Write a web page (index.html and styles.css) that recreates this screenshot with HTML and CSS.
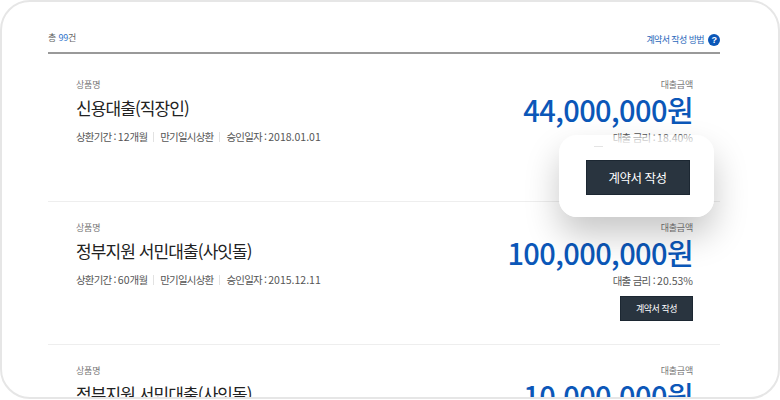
FILE: index.html
```html
<!DOCTYPE html>
<html lang="ko">

<head>
    <title>계약서 작성</title>
    <link rel="stylesheet" href="styles.css">
</head>

<body>
    <div class="frame">
        <div class="head">
            <div class="total">총 <b>99</b>건</div>
            <div class="guide">
                계약서 작성 방법
                <svg class="help" width="12" height="12" viewBox="0 0 12 12">
                    <circle cx="6" cy="6" r="6" fill="#0b57b8"></circle>
                    <text x="6" y="9.2" text-anchor="middle" font-size="9" font-weight="700" fill="#fff" font-family="Liberation Sans">?</text>
                </svg>
            </div>
        </div>

        <div class="row">
            <div class="info">
                <div class="label">상품명</div>
                <div class="name">신용대출(직장인)</div>
                <div class="meta">
                    <span>상환기간 : <i>12</i>개월</span>
                    <span>만기일시상환</span>
                    <span>승인일자 : <i>2018.01.01</i></span>
                </div>
            </div>
            <div class="loan">
                <div class="label">대출금액</div>
                <div class="amount">44,000,000원</div>
                <div class="rate">대출 금리 : <i>18.40%</i></div>
            </div>
        </div>

        <div class="row">
            <div class="info">
                <div class="label">상품명</div>
                <div class="name">정부지원 서민대출(사잇돌)</div>
                <div class="meta">
                    <span>상환기간 : <i>60</i>개월</span>
                    <span>만기일시상환</span>
                    <span>승인일자 : <i>2015.12.11</i></span>
                </div>
            </div>
            <div class="loan">
                <div class="label">대출금액</div>
                <div class="amount">100,000,000원</div>
                <div class="rate">대출 금리 : <i>20.53%</i></div>
                <button class="btn">계약서 작성</button>
            </div>
        </div>

        <div class="row">
            <div class="info">
                <div class="label">상품명</div>
                <div class="name">정부지원 서민대출(사잇돌)</div>
            </div>
            <div class="loan">
                <div class="label">대출금액</div>
                <div class="amount">10,000,000원</div>
            </div>
        </div>

        <div class="popup">
            <button class="btn-big">계약서 작성</button>
        </div>
    </div>
</body>

</html>
```

FILE: styles.css
```css
html,
body {
    margin: 0;
    height: 400px;
    overflow: hidden;
    background: #ffffff;
}

body {
    font-family: "Noto Sans CJK KR", "Noto Sans", sans-serif;
    color: #333333;
}

i {
    font-style: normal;
    letter-spacing: 0;
}

.frame {
    position: relative;
    box-sizing: border-box;
    width: 780px;
    height: 399px;
    padding: 0 58px 0 46px;
    border: 2px solid #e6e6e6;
    border-radius: 30px;
    overflow: hidden;
}

.head {
    display: flex;
    justify-content: space-between;
    align-items: flex-end;
    height: 44px;
    padding-bottom: 6px;
    border-bottom: 2px solid #999999;
}

.total {
    font-size: 9px;
    line-height: 12px;
    margin-bottom: 2px;
    letter-spacing: -0.2px;
    color: #666666;
}

.total b {
    font-weight: 400;
    color: #2f74cc;
}

.guide {
    display: flex;
    align-items: center;
    gap: 4px;
    font-size: 9px;
    line-height: 12px;
    letter-spacing: -0.6px;
    color: #2a68bb;
}

.row {
    display: flex;
    justify-content: space-between;
    height: 143px;
    padding: 20px 27px 0 28px;
    box-sizing: border-box;
    border-bottom: 1px solid #eeeeee;
}

.row:nth-child(2) {
    height: 148px;
    padding-top: 25px;
}

.label {
    font-size: 9px;
    line-height: 12px;
    letter-spacing: -0.2px;
    color: #777777;
}

.name {
    margin-top: 5px;
    font-size: 17px;
    line-height: 24px;
    letter-spacing: -0.9px;
    color: #222222;
}

.meta {
    display: flex;
    margin-top: 10px;
    font-size: 10.5px;
    line-height: 14px;
    letter-spacing: -0.8px;
    color: #555555;
}

.meta span + span {
    margin-left: 6px;
    padding-left: 7px;
    background: linear-gradient(#e2e2e2, #e2e2e2) left center / 1px 10px no-repeat;
}

.loan {
    display: flex;
    flex-direction: column;
    align-items: flex-end;
}

.amount {
    font-size: 29px;
    line-height: 36px;
    font-weight: 500;
    letter-spacing: -0.6px;
    color: #0b57b8;
}

.rate {
    margin-top: 3px;
    font-size: 10.5px;
    line-height: 15px;
    letter-spacing: -0.75px;
    color: #555555;
}

.btn {
    width: 73px;
    height: 25px;
    margin-top: 8px;
    padding: 0;
    border: 1px solid #1c2732;
    background: #29343f;
    color: #ffffff;
    font-family: inherit;
    font-size: 9px;
    letter-spacing: -0.5px;
}

.popup {
    position: absolute;
    left: 557px;
    top: 133px;
    display: flex;
    justify-content: center;
    align-items: center;
    width: 155px;
    height: 82px;
    border-radius: 18px;
    background: linear-gradient(rgba(255, 255, 255, 0.4), #ffffff 11px);
    box-shadow: 0 18px 34px rgba(0, 0, 0, 0.22);
}

.popup::before {
    content: "";
    position: absolute;
    left: 35px;
    top: 11px;
    width: 9px;
    height: 1px;
    background: #e4e4e4;
}

.btn-big {
    width: 104px;
    height: 35px;
    margin-top: 2px;
    margin-left: 2px;
    padding: 0;
    border: 1px solid #1c2732;
    background: #29343f;
    color: #ffffff;
    font-family: inherit;
    font-size: 12.5px;
    letter-spacing: -0.5px;
}
```
